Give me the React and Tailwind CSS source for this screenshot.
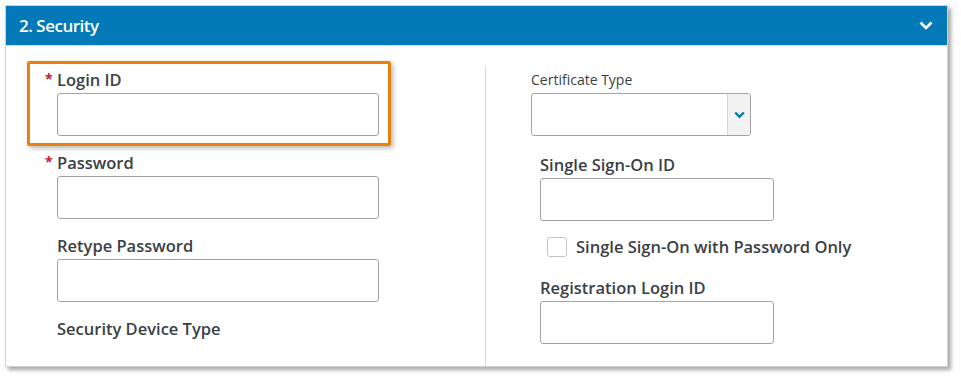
import React from "react";

const font = { fontFamily: '"Open Sans", "Liberation Sans", sans-serif' };

function Label({ children, required, small }) {
  return (
    <div className={`relative h-[22px] mb-[2px] whitespace-nowrap ${small ? "text-[14px] font-normal leading-[22px]" : "text-[16.5px] font-semibold leading-[22px]"} text-[#3a3f46]`}>
      {required && (
        <span className="absolute left-[-12px] top-[-1px] text-[14px] font-bold text-[#d0142c]">*</span>
      )}
      {children}
    </div>
  );
}

function Input({ w }) {
  return <div className={`${w} h-[43px] rounded-[3px] border border-[#a3a3a3] bg-white`} />;
}

export default function App() {
  return (
    <div className="w-[961px] h-[380px] bg-white pl-[5px] pt-[5px]" style={font}>
      <div className="w-[943px] h-[362px] border border-[#d2d2d2] bg-white shadow-[3px_3px_4px_rgba(0,0,0,0.35)] flex flex-col">
        <div className="h-[40px] bg-[#0479b8] border-b border-[#c9e0ee] flex items-center justify-between pl-[13px] pr-[14px]">
          <span className="text-white text-[17px] font-semibold tracking-[-0.5px]">2. Security</span>
          <svg width="14" height="9" viewBox="0 0 14 9">
            <path d="M1.5 1.5 L7 7 L12.5 1.5" fill="none" stroke="white" strokeWidth="2.6" />
          </svg>
        </div>
        <div className="flex flex-1">
          <div className="w-[479px] pl-[51px] pt-[23px] flex flex-col gap-[16px]">
            <div className="relative">
              <div className="absolute left-[-30px] top-[-8px] w-[364px] h-[85px] border-[3px] border-[#e8800c] rounded-[2px] shadow-[2px_2px_5px_rgba(0,0,0,0.3)]" />
              <Label required>Login ID</Label>
              <Input w="w-[322px]" />
            </div>
            <div>
              <Label required>Password</Label>
              <Input w="w-[322px]" />
            </div>
            <div>
              <Label>Retype Password</Label>
              <Input w="w-[322px]" />
            </div>
            <div>
              <Label>Security Device Type</Label>
            </div>
          </div>
          <div className="mt-[20px] border-l border-[#d6d6d6] flex-1 flex flex-col">
            <div className="pl-[45px] pt-[3px]">
              <Label small>Certificate Type</Label>
              <div className="w-[220px] h-[43px] rounded-[3px] border border-[#a3a3a3] bg-white flex justify-end overflow-hidden">
                <div className="w-[23px] h-full bg-[#f2f2f2] border-l border-[#d4d4d4] flex items-center justify-center">
                  <svg width="11" height="8" viewBox="0 0 11 8">
                    <path d="M1.2 1.5 L5.5 5.8 L9.8 1.5" fill="none" stroke="#0479b8" strokeWidth="2.4" />
                  </svg>
                </div>
              </div>
            </div>
            <div className="pl-[54px] mt-[18px]">
              <Label>Single Sign-On ID</Label>
              <Input w="w-[234px]" />
            </div>
            <div className="pl-[61px] mt-[16px] flex items-center gap-[9px] h-[20px]">
              <div className="w-[20px] h-[20px] rounded-[3px] border border-[#c4c4c4] bg-white" />
              <span className="text-[16.5px] font-semibold text-[#3a3f46] whitespace-nowrap">Single Sign-On with Password Only</span>
            </div>
            <div className="pl-[54px] mt-[20px]">
              <Label>Registration Login ID</Label>
              <Input w="w-[234px]" />
            </div>
          </div>
        </div>
      </div>
    </div>
  );
}
